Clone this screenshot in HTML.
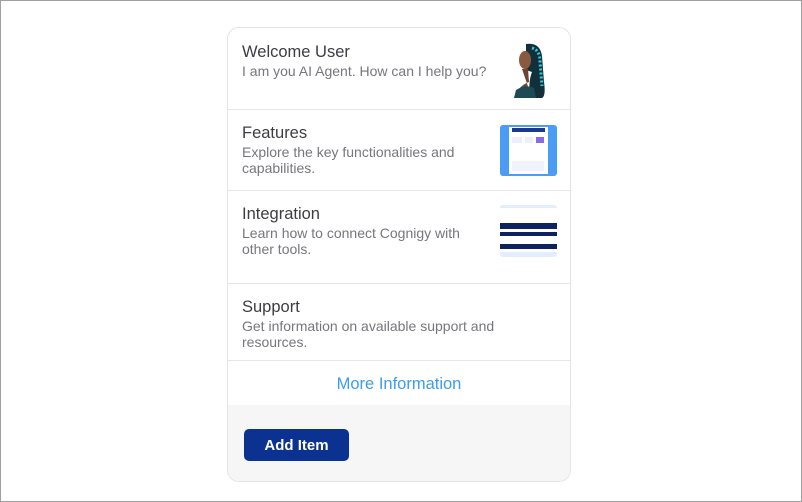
<!DOCTYPE html>
<html><head><style>
html,body{margin:0;padding:0}
body{width:800px;height:500px;border:1px solid #a0a0a0;background:#fff;position:relative;font-family:"Liberation Sans",sans-serif;overflow:hidden}
.card{position:absolute;left:226px;top:26px;width:342px;height:453px;border:1px solid #e4e4e4;border-radius:12px;overflow:hidden;background:#fff}
.sec{position:absolute;left:0;width:342px;border-bottom:1px solid #e6e6e6}
.t{position:absolute;left:14px;font-size:16.5px;color:#3c3c48}
.d{position:absolute;left:14px;font-size:14px;line-height:16px;color:#76767e;width:250px}
.img{position:absolute}
.foot{position:absolute;left:0;top:377px;width:342px;height:76px;background:#f6f6f6}
.btn{position:absolute;left:16px;top:24px;width:105px;height:32px;background:#0b3290;border-radius:5px;color:#fff;font-size:15px;font-weight:bold;text-align:center;line-height:33px}
</style></head><body>
<div class="card">
 <div class="sec" style="top:0;height:81px">
  <div class="t" style="top:15px">Welcome User</div>
  <div class="d" style="top:35px;width:280px">I am you AI Agent. How can I help you?</div>
  <svg class="img" style="left:284px;top:14px" width="36" height="56" viewBox="0 0 36 56">
   <path d="M14 2 Q28 0 30 14 L32 40 Q34 54 30 56 L18 56 Q16 40 20 30 L14 28 Z" fill="#12303a"/>
   <path d="M20 6 Q28 8 28 20 L30 44" stroke="#35c8e0" stroke-width="3" fill="none" stroke-dasharray="2 2"/>
   <ellipse cx="13" cy="18" rx="6" ry="9" fill="#8a5a40"/>
   <path d="M10 27 L16 27 L17 40 Q6 44 2 56 L20 56 Z" fill="#6e4532"/>
   <path d="M4 48 Q14 42 22 46 L24 56 L2 56Z" fill="#1d4a55"/>
  </svg>
 </div>
 <div class="sec" style="top:82px;height:80px">
  <div class="t" style="top:14px">Features</div>
  <div class="d" style="top:34px;width:240px">Explore the key functionalities and capabilities.</div>
  <svg class="img" style="left:272px;top:15px" width="57" height="51">
   <rect x="0" y="0" width="57" height="51" rx="3" fill="#4a9cf5"/>
   <rect x="9" y="2" width="39" height="47" fill="#fff"/>
   <rect x="12" y="3" width="33" height="4" fill="#1a3a8a"/>
   <rect x="12" y="12" width="10" height="6" fill="#eef"/><rect x="25" y="12" width="8" height="6" fill="#eef"/><rect x="36" y="12" width="8" height="6" fill="#8a6ae0"/>
   <rect x="12" y="36" width="32" height="10" fill="#f0f4fa"/>
  </svg>
 </div>
 <div class="sec" style="top:163px;height:92px">
  <div class="t" style="top:14px">Integration</div>
  <div class="d" style="top:34px;width:236px">Learn how to connect Cognigy with other tools.</div>
  <svg class="img" style="left:272px;top:14px" width="57" height="52">
   <rect x="0" y="0" width="57" height="52" rx="3" fill="#e2eefb"/>
   <rect x="0" y="3" width="57" height="44" fill="#fff"/>
   <rect x="0" y="18" width="57" height="6" fill="#0d2360"/>
   <rect x="0" y="27" width="57" height="4" fill="#0d2360"/>
   <rect x="0" y="39" width="57" height="5" fill="#0d2360"/>
  </svg>
 </div>
 <div class="sec" style="top:256px;height:76px">
  <div class="t" style="top:14px">Support</div>
  <div class="d" style="top:34px;width:280px">Get information on available support and resources.</div>
 </div>
 <div style="position:absolute;top:347px;left:0;width:342px;text-align:center;font-size:16.5px;color:#3d9cf0">More Information</div>
 <div class="foot"><div class="btn">Add Item</div></div>
</div>
</body></html>
